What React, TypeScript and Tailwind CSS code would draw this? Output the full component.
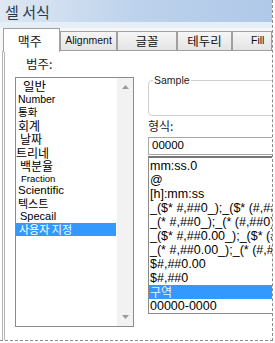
const kr = { fontFamily: '"Noto Sans CJK KR", "Noto Sans", sans-serif' };
const en = { fontFamily: '"Liberation Sans", Arial, sans-serif' };

// Category list on the left, sizes are uneven in the original capture
const categories = [
  { label: "일반", h: "h-[14px]", cls: "pl-[7px] text-[12.5px]", k: true },
  { label: "Number", h: "h-[13px]", cls: "pl-[2px] text-[10.5px]", k: false },
  { label: "통화", h: "h-[13px]", cls: "pl-[2px] text-[10.5px]", k: true },
  { label: "회계", h: "h-[13px]", cls: "pl-[2px] text-[12px]", k: true },
  { label: "날짜", h: "h-[14px]", cls: "pl-[4px] text-[12px]", k: true },
  { label: "트리네", h: "h-[13px]", cls: "pl-0 text-[12px]", k: true },
  { label: "백분율", h: "h-[14px]", cls: "pl-[4px] text-[12px]", k: true },
  { label: "Fraction", h: "h-[12px]", cls: "pl-[5px] text-[9.5px]", k: false },
  { label: "Scientific", h: "h-[12px]", cls: "pl-[2px] text-[11.5px]", k: false },
  { label: "텍스트", h: "h-[12px]", cls: "pl-[2px] text-[11px]", k: true },
  { label: "Specail", h: "h-[14px]", cls: "pl-[4px] text-[11px]", k: false },
];

const formats = [
  "mm:ss.0",
  "@",
  "[h]:mm:ss",
  "_($* #,##0_);_($* (#,##0);_($* \"-\"_);_(@_)",
  "_(* #,##0_);_(* (#,##0);_(* \"-\"_);_(@_)",
  "_($* #,##0.00_);_($* (#,##0.00);_($* \"-\"??_);_(@_)",
  "_(* #,##0.00_);_(* (#,##0.00);_(* \"-\"??_);_(@_)",
  "$#,##0.00",
  "$#,##0",
];

function Tab({ label, w, korean, extra }: { label: string; w: string; korean?: boolean; extra?: string }) {
  return (
    <div
      className={`${w} h-[19px] mt-[4px] flex items-center border border-b-0 border-[#a0a0a0] bg-gradient-to-b from-[#f6f6f6] to-[#e4e4e4] text-[#111] ${korean ? "text-[12.5px]" : "text-[10.5px]"} ${extra ?? "justify-center"}`}
      style={korean ? kr : en}
    >
      {label}
    </div>
  );
}

export default function App() {
  return (
    <div className="w-[275px] h-[343px] bg-white overflow-hidden">
      <div className="w-[273px] h-[341px] border-r border-b border-dashed border-[#8a8a8a] overflow-hidden flex flex-col">
        {/* title bar */}
        <div className="h-[22px] shrink-0 flex items-center bg-gradient-to-r from-[#dfe8f3] via-[#bdd2ec] to-[#afc9e8]">
          <span className="pl-[5px] text-[15px] text-[#2b3a4e] leading-none" style={kr}>
            셀 서식
          </span>
        </div>
        <div className="h-[6px] shrink-0 bg-[#e6eef7]" />

        {/* tabs */}
        <div className="h-[23px] shrink-0 flex items-start bg-[#f7f7f7]">
          <div className="w-[3px] h-full" />
          <div
            className="w-[62px] h-[24px] flex items-center pl-[14px] border border-b-0 border-[#a0a0a0] bg-white text-[13px] text-[#111] relative z-10"
            style={kr}
          >
            맥주
          </div>
          <div className="flex-1 flex self-end items-end border-b border-[#a0a0a0] h-full">
            <Tab label="Alignment" w="w-[57px]" />
            <Tab label="글꼴" w="w-[60px]" korean />
            <Tab label="테두리" w="w-[55px]" korean />
            <Tab label="Fill" w="w-[40px]" extra="justify-start pl-[18px]" />
          </div>
        </div>

        {/* body */}
        <div className="flex-1 flex border-l-[3px] border-double border-[#b4b4b4] ml-[2px] bg-white">
          {/* left: categories */}
          <div className="w-[131px] pl-[10px] flex flex-col">
            <div className="h-[26px] flex items-center pl-[11px] text-[12.5px] text-[#222]" style={kr}>
              범주:
            </div>
            <div className="w-[119px] h-[250px] border border-[#8c8c8c] flex">
              <div className="flex-1 flex flex-col pt-[1px] overflow-hidden">
                {categories.map((c) => (
                  <div
                    key={c.label}
                    className={`${c.h} flex items-center leading-none text-black whitespace-nowrap ${c.cls}`}
                    style={c.k ? kr : en}
                  >
                    {c.label}
                  </div>
                ))}
                <div
                  className="h-[13px] mr-[1px] flex items-center pl-[3px] text-[11px] leading-none bg-[#3399ff] text-white"
                  style={kr}
                >
                  사용자 지정
                </div>
              </div>
              <div className="w-[16px] bg-[#f2f2f2] flex flex-col justify-between items-center py-[7px]">
                <svg width="7" height="4" viewBox="0 0 7 4">
                  <path d="M0 4 L3.5 0 L7 4 Z" fill="#9a9a9a" />
                </svg>
                <svg width="7" height="4" viewBox="0 0 7 4">
                  <path d="M0 0 L3.5 4 L7 0 Z" fill="#9a9a9a" />
                </svg>
              </div>
            </div>
          </div>

          {/* right: sample + format */}
          <div className="flex-1 flex flex-col pl-[12px] overflow-hidden">
            <div className="h-[29px]" />
            <div className="h-[36px] -mr-[6px] border border-[#cfcfcf] rounded-[4px] relative">
              <span
                className="absolute -top-[6px] left-[4px] bg-white px-[1px] text-[10.5px] leading-none text-[#222]"
                style={en}
              >
                Sample
              </span>
            </div>
            <div className="h-[21px] flex items-end pb-[2px] text-[12px] text-[#222]" style={kr}>
              형식:
            </div>
            <div
              className="h-[18px] -mr-[6px] border border-[#a8a8a8] flex items-center pl-[3px] text-[11.5px] text-black leading-none"
              style={en}
            >
              00000
            </div>
            <div className="h-[158px] -mr-[6px] mt-[1px] border border-t-2 border-[#8c8c8c] border-t-[#777] flex flex-col pt-[1px] overflow-hidden">
              {formats.map((f) => (
                <div
                  key={f}
                  className="h-[14px] flex items-center pl-[1px] text-[12.5px] leading-none text-black whitespace-nowrap"
                  style={en}
                >
                  {f}
                </div>
              ))}
              <div
                className="h-[14px] flex items-center pl-[1px] text-[12px] leading-none bg-[#3399ff] text-[#e8f3ff]"
                style={kr}
              >
                구역
              </div>
              <div
                className="h-[14px] flex items-center pl-[1px] text-[12.5px] leading-none text-black"
                style={en}
              >
                00000-0000
              </div>
            </div>
          </div>
        </div>
      </div>
    </div>
  );
}
